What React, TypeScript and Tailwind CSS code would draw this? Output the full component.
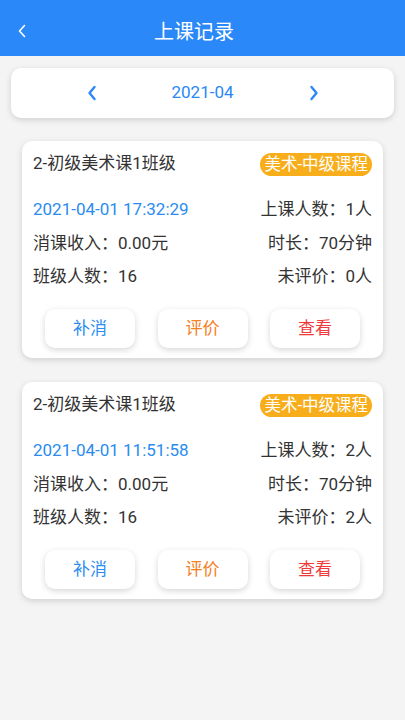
import React from "react";

interface Record {
  title: string;
  tag: string;
  time: string;
  attend: number;
  income: string;
  duration: string;
  size: number;
  unrated: number;
}

const records: Record[] = [
  {
    title: "2-初级美术课1班级",
    tag: "美术-中级课程",
    time: "2021-04-01 17:32:29",
    attend: 1,
    income: "0.00元",
    duration: "70分钟",
    size: 16,
    unrated: 0,
  },
  {
    title: "2-初级美术课1班级",
    tag: "美术-中级课程",
    time: "2021-04-01 11:51:58",
    attend: 2,
    income: "0.00元",
    duration: "70分钟",
    size: 16,
    unrated: 2,
  },
];

const font = {
  fontFamily: '"Roboto", "Noto Sans CJK SC", sans-serif',
};

const RecordCard: React.FC<{ r: Record }> = ({ r }) => (
  <div className="mx-[22px] rounded-[10px] bg-white px-[11px] pt-[11px] pb-[10px] shadow-[0_2px_6px_rgba(0,0,0,0.15)]">
    {/* Title row */}
    <div className="flex h-6 items-center justify-between">
      <span className="text-[17px] text-[#333]">{r.title}</span>
      <span className="rounded-full bg-[#f8ae1b] px-[4px] text-[16.5px] leading-[23px] text-white">
        {r.tag}
      </span>
    </div>

    {/* Info rows */}
    <div className="mt-[21px] flex flex-col gap-[9.5px] text-[17px] leading-6 text-[#333]">
      <div className="flex justify-between">
        <span className="text-[#2a8cf0]">{r.time}</span>
        <span>上课人数：{r.attend}人</span>
      </div>
      <div className="flex justify-between">
        <span>消课收入：{r.income}</span>
        <span>时长：{r.duration}</span>
      </div>
      <div className="flex justify-between">
        <span>班级人数：{r.size}</span>
        <span>未评价：{r.unrated}人</span>
      </div>
    </div>

    {/* Actions */}
    <div className="mt-[21px] flex justify-between px-[12px]">
      <button className="h-[39px] w-[90px] rounded-[10px] bg-white text-[17px] text-[#2a8cf0] shadow-[0_2px_6px_rgba(0,0,0,0.16)]">
        补消
      </button>
      <button className="h-[39px] w-[90px] rounded-[10px] bg-white text-[17px] text-[#f5801f] shadow-[0_2px_6px_rgba(0,0,0,0.16)]">
        评价
      </button>
      <button className="h-[39px] w-[90px] rounded-[10px] bg-white text-[17px] text-[#f03a3a] shadow-[0_2px_6px_rgba(0,0,0,0.16)]">
        查看
      </button>
    </div>
  </div>
);

export default function App() {
  return (
    <div className="min-h-[720px] bg-[#f4f4f4]" style={font}>
      {/* Header */}
      <header className="relative flex h-14 items-center justify-center bg-[#2a88f8]">
        <button className="absolute left-[17px] top-[24px]" aria-label="back">
          <svg width="10" height="14" viewBox="0 0 10 14" fill="none">
            <path d="M7.5 1.5L2.5 7l5 5.5" stroke="white" strokeWidth="1.6" strokeLinecap="round" strokeLinejoin="round" />
          </svg>
        </button>
        <h1 className="mr-[17px] pt-[8px] text-[20px] font-normal text-white">上课记录</h1>
      </header>

      {/* Month switcher */}
      <div className="mx-[11px] mt-3 flex h-[50px] items-center justify-center rounded-[10px] bg-white shadow-[0_2px_6px_rgba(0,0,0,0.15)]">
        <div className="flex w-[232px] items-center justify-between">
          <svg width="10" height="16" viewBox="0 0 10 16" fill="none">
            <path d="M7.5 2L2.5 8l5 6" stroke="#2a88f8" strokeWidth="2.4" strokeLinecap="round" strokeLinejoin="round" />
          </svg>
          <span className="text-[17px] text-[#2a88f8]">2021-04</span>
          <svg width="10" height="16" viewBox="0 0 10 16" fill="none">
            <path d="M2.5 2l5 6-5 6" stroke="#2a88f8" strokeWidth="2.4" strokeLinecap="round" strokeLinejoin="round" />
          </svg>
        </div>
      </div>

      {/* Records */}
      <div className="mt-[23px] flex flex-col gap-6 pb-6">
        {records.map((r, i) => (
          <RecordCard key={i} r={r} />
        ))}
      </div>
    </div>
  );
}
